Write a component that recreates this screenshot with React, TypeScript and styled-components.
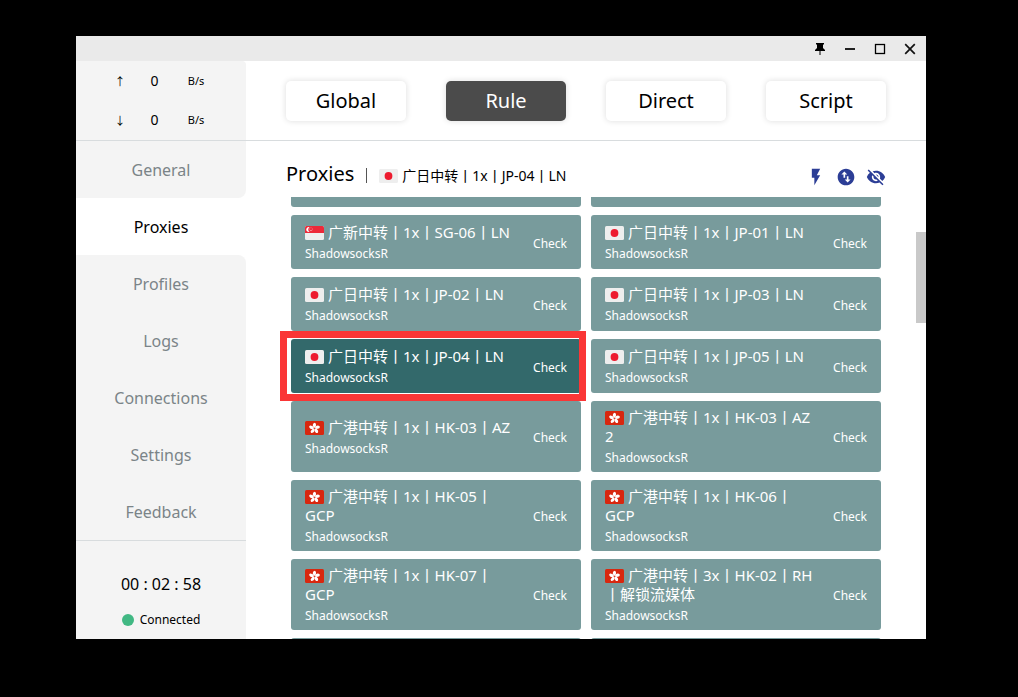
import React, { useLayoutEffect, useRef } from "react";
import styled, { createGlobalStyle, css } from "styled-components";
import { MdFlashOn, MdSwapVerticalCircle, MdVisibilityOff } from "react-icons/md";

const GlobalStyle = createGlobalStyle`
  * { box-sizing: border-box; }
  body {
    margin: 0;
    background: #000;
    color: #000;
    font-family: "Noto Sans", "Noto Sans CJK SC", sans-serif;
  }
  button { font: inherit; color: inherit; border: 0; padding: 0; background: none; cursor: pointer; }
`;

const Desktop = styled.div`
  height: 100vh;
  min-height: 600px;
  padding: 36px 92px 58px 76px;
`;

const Window = styled.div`
  height: 100%;
  display: flex;
  flex-direction: column;
  background: #fff;
  overflow: hidden;
`;

const TitleBar = styled.header`
  flex: none;
  height: 25px;
  padding-right: 6px;
  display: flex;
  justify-content: flex-end;
  align-items: center;
  gap: 10px;
  background: #eaeaea;
`;

const WindowButton = styled.button`
  width: 20px;
  height: 20px;
  display: flex;
  align-items: center;
  justify-content: center;
`;

const Body = styled.div`
  flex: 1;
  min-height: 0;
  display: flex;
`;

const Sidebar = styled.aside`
  flex: none;
  width: 170px;
  display: flex;
  flex-direction: column;
`;

const Traffic = styled.div`
  height: 80px;
  display: flex;
  flex-direction: column;
  background: #f4f4f4;
  border-bottom: 1px solid #d8dcde;
  border-top-right-radius: 4px;
`;

const TrafficRow = styled.div`
  height: 39px;
  padding: 0 35px 0 36px;
  display: grid;
  grid-template-columns: 16px 1fr 30px;
  align-items: center;
  text-align: center;
  font-size: 14px;
`;

const Small = styled.span`
  font-size: 11px;
`;

const Nav = styled.nav`
  display: flex;
  flex-direction: column;
`;

const NavItem = styled.a<{ $active?: boolean; $edge?: "above" | "below" }>`
  height: 57px;
  display: flex;
  align-items: center;
  justify-content: center;
  font-size: 16px;
  text-decoration: none;
  color: ${(p) => (p.$active ? "#000" : "#7b8488")};
  background: ${(p) => (p.$active ? "#fff" : "#f4f4f4")};
  ${(p) => p.$edge === "above" && css`border-bottom-right-radius: 8px;`}
  ${(p) => p.$edge === "below" && css`border-top-right-radius: 8px;`}
`;

const Session = styled.div`
  flex: 1;
  padding-top: 31px;
  display: flex;
  flex-direction: column;
  align-items: center;
  gap: 14px;
  background: #f4f4f4;
  border-top: 1px solid #d8dcde;
`;

const Clock = styled.div`
  font-size: 16px;
  line-height: 24px;
`;

const Connection = styled.div`
  display: flex;
  align-items: center;
  gap: 6px;
  font-size: 12px;
  line-height: 20px;
`;

const Dot = styled.span`
  width: 12px;
  height: 12px;
  border-radius: 50%;
  background: #41b883;
`;

const Main = styled.main`
  position: relative;
  flex: 1;
  min-width: 0;
  display: flex;
  flex-direction: column;
`;

const Modes = styled.div`
  flex: none;
  height: 80px;
  padding: 0 40px;
  display: grid;
  grid-template-columns: repeat(4, 1fr);
  gap: 40px;
  align-items: center;
  border-bottom: 1px solid #d8dcde;
`;

const ModeButton = styled.button<{ $active?: boolean }>`
  height: 40px;
  border-radius: 5px;
  font-size: 20px;
  color: ${(p) => (p.$active ? "#fff" : "#000")};
  background: ${(p) => (p.$active ? "#4b4b4b" : "#fff")};
  box-shadow: 0 0 6px rgba(0, 0, 0, 0.14);
`;

const Heading = styled.div`
  flex: none;
  height: 56px;
  padding: 12px 40px 0;
  display: flex;
  align-items: center;
`;

const Title = styled.h1`
  margin: 0 12px 0 0;
  font-size: 20px;
  line-height: 26px;
  padding-bottom: 2px;
  font-weight: 400;
`;

const Selected = styled.div`
  flex: 1;
  display: flex;
  align-items: center;
  font-size: 14px;
  gap: 4px;
`;

const Divider = styled.span`
  width: 1px;
  height: 15px;
  margin-right: 8px;
  background: #555;
`;

const Tools = styled.div`
  padding-top: 4px;
  display: flex;
  gap: 10px;
  color: #2c3e96;
`;

const ToolButton = styled.button`
  width: 20px;
  height: 20px;
  display: flex;
`;

const ProxyList = styled.div`
  flex: 1;
  min-height: 0;
  padding: 0 45px;
  display: grid;
  grid-template-columns: 1fr 1fr;
  grid-auto-rows: max-content;
  align-content: start;
  gap: 8px 10px;
  overflow-y: scroll;
  scrollbar-width: none;
`;

const Thumb = styled.div`
  position: absolute;
  right: 0;
  top: 171px;
  width: 10px;
  height: 91px;
  background: #c9c9c9;
`;

const Card = styled.article<{ $selected?: boolean }>`
  position: relative;
  min-height: 54px;
  padding: 7px 14px 4px;
  display: flex;
  align-items: center;
  justify-content: space-between;
  border-radius: 3px;
  color: #fff;
  background: ${(p) => (p.$selected ? "#33696b" : "#789b9c")};
  ${(p) =>
    p.$selected &&
    css`
      z-index: 1;
      &::after {
        content: "";
        position: absolute;
        inset: -8px -5px -8px -11px;
        border: 7px solid #fa3636;
        pointer-events: none;
      }
    `}
`;

const CardText = styled.div`
  display: flex;
  flex-direction: column;
  gap: 2px;
`;

const Name = styled.div`
  font-size: 15px;
  line-height: 19px;
  white-space: pre-line;
`;

const Kind = styled.div`
  font-size: 12px;
  line-height: 20px;
`;

const Check = styled.button`
  font-size: 12px;
  line-height: 18px;
`;

const FlagSvg = styled.svg`
  flex: none;
  width: 19px;
  height: 14px;
  margin-right: 4px;
  vertical-align: -2px;
`;

type Country = "SG" | "JP" | "HK";

const Flag = ({ country }: { country: Country }) => (
  <FlagSvg viewBox="0 0 19 14" aria-hidden="true">
    <rect width="19" height="14" rx="1.5" fill={country === "HK" ? "#d8270f" : "#eee"} />
    {country === "JP" && <circle cx="9.5" cy="7" r="3.9" fill="#ed1b2f" />}
    {country === "SG" && (
      <>
        <path d="M0 7V1.500Q0 0 1.500 0H17.500Q19 0 19 1.500V7z" fill="#ed2939" />
        <path d="M4.600 1.200A2.500 2.500 0 1 0 4.600 5.900A2.700 2.700 0 0 1 4.600 1.200z" fill="#fff" />
        <g fill="#fff">
          <circle cx="6" cy="1.800" r="0.400" />
          <circle cx="4.800" cy="3" r="0.400" />
          <circle cx="7.200" cy="3" r="0.400" />
          <circle cx="5.300" cy="4.500" r="0.400" />
          <circle cx="6.800" cy="4.500" r="0.400" />
        </g>
      </>
    )}
    {country === "HK" &&
      [0, 72, 144, 216, 288].map((a) => (
        <path
          key={a}
          d="M9.500 6.800C7.600 5.900 7 3.100 9.400 1.700C11.300 2.100 10.900 3.200 11 4.200C11 5.400 10.400 6.300 9.500 6.800z"
          fill="#fff"
          transform={`rotate(${a} 9.500 7.300)`}
        />
      ))}
  </FlagSvg>
);

const proxies: { country: Country; name: string; selected?: boolean }[] = [
  { country: "SG", name: "广新中转丨1x丨SG-04丨LN" },
  { country: "SG", name: "广新中转丨1x丨SG-05丨LN" },
  { country: "SG", name: "广新中转丨1x丨SG-06丨LN" },
  { country: "JP", name: "广日中转丨1x丨JP-01丨LN" },
  { country: "JP", name: "广日中转丨1x丨JP-02丨LN" },
  { country: "JP", name: "广日中转丨1x丨JP-03丨LN" },
  { country: "JP", name: "广日中转丨1x丨JP-04丨LN", selected: true },
  { country: "JP", name: "广日中转丨1x丨JP-05丨LN" },
  { country: "HK", name: "广港中转丨1x丨HK-03丨AZ" },
  { country: "HK", name: "广港中转丨1x丨HK-03丨AZ\n2" },
  { country: "HK", name: "广港中转丨1x丨HK-05丨\nGCP" },
  { country: "HK", name: "广港中转丨1x丨HK-06丨\nGCP" },
  { country: "HK", name: "广港中转丨1x丨HK-07丨\nGCP" },
  { country: "HK", name: "广港中转丨3x丨HK-02丨RH\n丨解锁流媒体" },
  { country: "HK", name: "广港中转丨3x丨HK-03丨RH\n丨解锁流媒体" },
  { country: "HK", name: "广港中转丨3x丨HK-04丨RH\n丨解锁流媒体" },
];

const pages = ["General", "Proxies", "Profiles", "Logs", "Connections", "Settings", "Feedback"];
const modes = ["Global", "Rule", "Direct", "Script"];
const activePage = 1;
const initialScroll = 44;

export default function App() {
  const list = useRef<HTMLDivElement>(null);

  useLayoutEffect(() => {
    if (list.current) list.current.scrollTop = initialScroll;
  }, []);

  return (
    <>
      <GlobalStyle />
      <Desktop>
        <Window>
          <TitleBar>
            <WindowButton aria-label="Pin">
              <svg width="12" height="14" viewBox="0 0 12 14">
                <path d="M2 1H10V2.500H9V6L11 8V9H6.500V13H5.500V9H1V8L3 6V2.500H2z" fill="#000" />
              </svg>
            </WindowButton>
            <WindowButton aria-label="Minimize">
              <svg width="12" height="12" viewBox="0 0 12 12">
                <path d="M1 6H11" stroke="#222" strokeWidth="2" />
              </svg>
            </WindowButton>
            <WindowButton aria-label="Maximize">
              <svg width="12" height="12" viewBox="0 0 12 12">
                <rect x="1.500" y="1.500" width="9" height="9" fill="none" stroke="#000" strokeWidth="1.300" />
              </svg>
            </WindowButton>
            <WindowButton aria-label="Close">
              <svg width="12" height="12" viewBox="0 0 12 12">
                <path d="M1.200 1.200L10.800 10.800M10.800 1.200L1.200 10.800" stroke="#111" strokeWidth="1.700" />
              </svg>
            </WindowButton>
          </TitleBar>
          <Body>
            <Sidebar>
              <Traffic>
                <TrafficRow>
                  <Small>↑</Small>
                  <span>0</span>
                  <Small>B/s</Small>
                </TrafficRow>
                <TrafficRow>
                  <Small>↓</Small>
                  <span>0</span>
                  <Small>B/s</Small>
                </TrafficRow>
              </Traffic>
              <Nav>
                {pages.map((page, i) => (
                  <NavItem
                    key={page}
                    href="#"
                    $active={i === activePage}
                    $edge={i === activePage - 1 ? "above" : i === activePage + 1 ? "below" : undefined}
                  >
                    {page}
                  </NavItem>
                ))}
              </Nav>
              <Session>
                <Clock>00 : 02 : 58</Clock>
                <Connection>
                  <Dot />
                  Connected
                </Connection>
              </Session>
            </Sidebar>
            <Main>
              <Modes>
                {modes.map((mode) => (
                  <ModeButton key={mode} $active={mode === "Rule"}>
                    {mode}
                  </ModeButton>
                ))}
              </Modes>
              <Heading>
                <Title>Proxies</Title>
                <Selected>
                  <Divider />
                  <span>
                    <Flag country="JP" />
                    广日中转丨1x丨JP-04丨LN
                  </span>
                </Selected>
                <Tools>
                  <ToolButton aria-label="Test latency">
                    <MdFlashOn size={20} />
                  </ToolButton>
                  <ToolButton aria-label="Sort">
                    <MdSwapVerticalCircle size={20} />
                  </ToolButton>
                  <ToolButton aria-label="Hide unavailable">
                    <MdVisibilityOff size={20} />
                  </ToolButton>
                </Tools>
              </Heading>
              <ProxyList ref={list}>
                {proxies.map((proxy) => (
                  <Card key={proxy.name} $selected={proxy.selected}>
                    <CardText>
                      <Name>
                        <Flag country={proxy.country} />
                        {proxy.name}
                      </Name>
                      <Kind>ShadowsocksR</Kind>
                    </CardText>
                    <Check>Check</Check>
                  </Card>
                ))}
              </ProxyList>
              <Thumb />
            </Main>
          </Body>
        </Window>
      </Desktop>
    </>
  );
}
